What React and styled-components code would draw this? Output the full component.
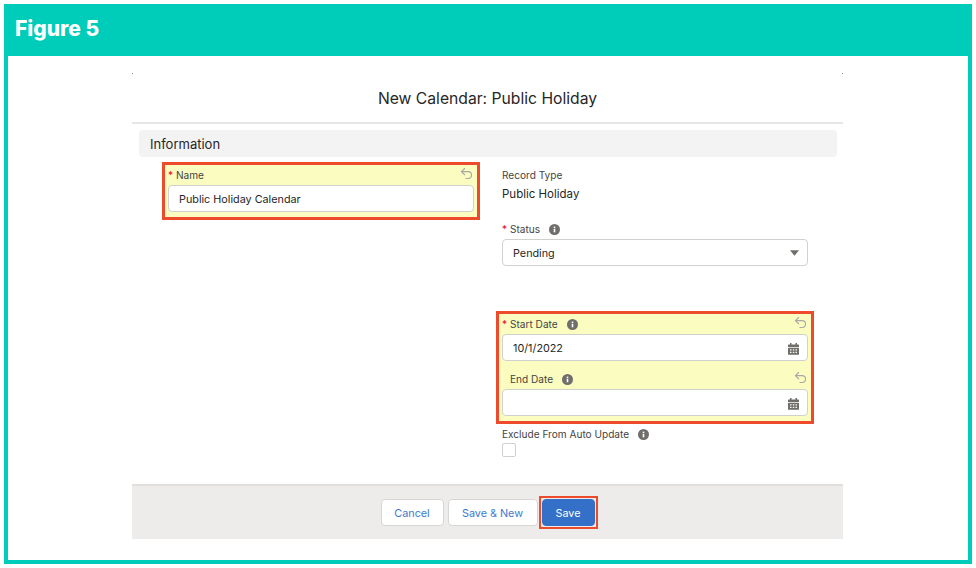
import React from "react";
import styled, { createGlobalStyle } from "styled-components";
import { Undo2 } from "lucide-react";

const GlobalStyle = createGlobalStyle`
  html, body {
    margin: 0;
    background: #fff;
  }
  * {
    box-sizing: border-box;
  }
`;

// outer teal frame
const Frame = styled.div`
  display: flex;
  flex-direction: column;
  width: 968px;
  height: 560px;
  margin: 4px;
  background: #00cdb9;
  padding: 0 4px 4px;
`;

const Banner = styled.h1`
  display: flex;
  align-items: center;
  height: 52px;
  margin: 0;
  padding: 0 7px 4px;
  font: 800 21px "Inter", "Liberation Sans", sans-serif;
  color: #fff;
`;

const Sheet = styled.div`
  flex: 1;
  display: flex;
  justify-content: flex-start;
  padding: 17px 0 0 124px;
  background: #fff;
`;

const Form = styled.div`
  width: 711px;
  font-family: "Inter", "Liberation Sans", sans-serif;
  color: #262626;
`;

const CornerMarks = styled.div`
  display: flex;
  justify-content: space-between;
  height: 1px;
`;

const Mark = styled.span`
  width: 1px;
  height: 1px;
  background: #8a8a8a;
`;

const Title = styled.h2`
  height: 48px;
  margin: 0;
  font-size: 15.7px;
  font-weight: 400;
  line-height: 49px;
  text-align: center;
`;

const Divider = styled.div`
  height: 2px;
  background: #e6e6e6;
`;

const Section = styled.div`
  height: 27px;
  margin: 6px 6px 0 7px;
  padding-left: 11px;
  border-radius: 4px;
  background: #f3f3f3;
  font-size: 13px;
  line-height: 28px;
`;

const Columns = styled.div`
  display: grid;
  grid-template-columns: 318px 318px;
  column-gap: 16px;
  margin-top: 5px;
  padding-left: 30px;
`;

const Column = styled.div`
  display: flex;
  flex-direction: column;
`;

// red box with yellow fill around the changed fields
const Highlight = styled.div`
  display: flex;
  flex-direction: column;
  height: ${(p) => p.$height}px;
  padding: 2px 3px 0;
  border: 3px solid #ee4a2c;
  background: #fbfdc0;
  margin-top: ${(p) => p.$top || 0}px;
`;

const Plain = styled.div`
  display: flex;
  flex-direction: column;
  padding: 0 6px;
  margin-top: ${(p) => p.$top || 0}px;
`;

const LabelRow = styled.div`
  display: flex;
  align-items: center;
  height: 16px;
  margin-top: ${(p) => p.$top || 0}px;
  margin-bottom: ${(p) => p.$bottom || 0}px;
  padding-left: ${(p) => p.$indent || 0}px;
  font-size: 10.1px;
  color: #444;
`;

const Star = styled.span`
  width: 5px;
  margin-right: 3px;
  color: #ea001e;
`;

const Reset = styled.span`
  display: flex;
  margin-left: auto;
  margin-top: -3px;
  color: #a8a8a4;
`;

const Value = styled.div`
  height: 16px;
  margin-top: 3px;
  font-size: 11.5px;
  line-height: 16px;
`;

const Control = styled.div`
  display: flex;
  align-items: center;
  justify-content: space-between;
  height: 27px;
  flex-shrink: 0;
  padding: 1px 8px 0 10px;
  border: 1px solid #d0d0cc;
  border-radius: 4px;
  background: #fff;
  font-size: 10.8px;
`;

const Check = styled.div`
  width: 14px;
  height: 14px;
  margin-top: 1px;
  border: 1px solid #d0d0cc;
  border-radius: 2px;
  background: #fff;
`;

const Footer = styled.div`
  display: flex;
  justify-content: center;
  align-items: flex-start;
  gap: 4px;
  height: 55px;
  margin-top: 27px;
  padding-top: 13px;
  border-top: 2px solid #e0dfdd;
  background: #edecea;
`;

const Button = styled.button`
  height: 27px;
  width: ${(p) => p.$width}px;
  padding: 1px 0 0;
  border: 1px solid ${(p) => (p.$primary ? "#3470c7" : "#d6d6d4")};
  border-radius: 4px;
  background: ${(p) => (p.$primary ? "#3470c7" : "#fff")};
  color: ${(p) => (p.$primary ? "#fff" : "#3c78d0")};
  font: 400 10.8px "Inter", "Liberation Sans", sans-serif;
`;

// square red outline drawn around the Save button
const SaveOutline = styled.div`
  display: flex;
  margin: -3px;
  padding: 1px;
  border: 2px solid #ee4a2c;
`;

const Info = () => (
  <svg width="11" height="11" viewBox="0 0 11 11" style={{ marginLeft: 9 }}>
    <circle cx="5.5" cy="5.5" r="5.5" fill="#706e6b" />
    <rect x="4.7" y="4.7" width="1.6" height="3.6" fill="#fff" />
    <rect x="4.7" y="2.6" width="1.6" height="1.4" fill="#fff" />
  </svg>
);

const Calendar = () => (
  <svg width="11" height="12" viewBox="0 0 11 12" style={{ marginTop: 2 }}>
    <rect x="2" y="0" width="1.5" height="2.5" fill="#706e6b" />
    <rect x="7.5" y="0" width="1.5" height="2.5" fill="#706e6b" />
    <rect x="0" y="1.5" width="11" height="2.5" rx="0.6" fill="#706e6b" />
    <rect x="0" y="4.8" width="11" height="7" rx="0.6" fill="#706e6b" />
    <path d="M2 6.3h1.5v1.2H2zM4.8 6.3h1.5v1.2H4.8zM7.5 6.3H9v1.2H7.5zM2 8.8h1.5V10H2zM4.8 8.8h1.5V10H4.8zM7.5 8.8H9V10H7.5z" fill="#fbfbf4" />
  </svg>
);

const Caret = () => (
  <svg width="9" height="6" viewBox="0 0 10 6">
    <path d="M0 0h10L5 6z" fill="#706e6b" />
  </svg>
);

const ResetIcon = () => (
  <Reset>
    <Undo2 size={15} strokeWidth={1.8} />
  </Reset>
);

export default function App() {
  return (
    <>
      <GlobalStyle />
      <Frame>
        <Banner>Figure 5</Banner>
        <Sheet>
          <Form>
            <CornerMarks>
              <Mark />
              <Mark />
            </CornerMarks>
            <Title>New Calendar: Public Holiday</Title>
            <Divider />
            <Section>Information</Section>
            <Columns>
              <Column>
                <Highlight $height={58}>
                  <LabelRow $bottom={2}>
                    <Star>*</Star>Name
                    <ResetIcon />
                  </LabelRow>
                  <Control>Public Holiday Calendar</Control>
                </Highlight>
              </Column>
              <Column>
                <Plain $top={5}>
                  <LabelRow>Record Type</LabelRow>
                  <Value>Public Holiday</Value>
                  <LabelRow $top={19} $bottom={2}>
                    <Star>*</Star>Status
                    <Info />
                  </LabelRow>
                  <Control>
                    Pending
                    <Caret />
                  </Control>
                </Plain>
                <Highlight $height={113} $top={45}>
                  <LabelRow $bottom={2}>
                    <Star>*</Star>Start Date
                    <Info />
                    <ResetIcon />
                  </LabelRow>
                  <Control>
                    10/1/2022
                    <Calendar />
                  </Control>
                  <LabelRow $top={10} $bottom={2} $indent={8}>
                    End Date
                    <Info />
                    <ResetIcon />
                  </LabelRow>
                  <Control>
                    <span />
                    <Calendar />
                  </Control>
                </Highlight>
                <Plain $top={2}>
                  <LabelRow>
                    Exclude From Auto Update
                    <Info />
                  </LabelRow>
                  <Check />
                </Plain>
              </Column>
            </Columns>
            <Footer>
              <Button $width={63}>Cancel</Button>
              <Button $width={90}>Save &amp; New</Button>
              <SaveOutline>
                <Button $width={53} $primary>
                  Save
                </Button>
              </SaveOutline>
            </Footer>
          </Form>
        </Sheet>
      </Frame>
    </>
  );
}
